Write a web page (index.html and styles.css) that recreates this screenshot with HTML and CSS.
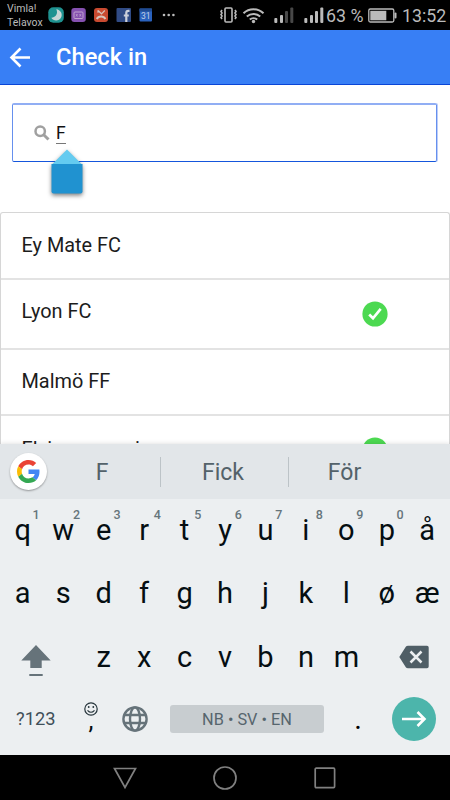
FILE: index.html
```html
<!DOCTYPE html>
<html lang="en">
<head>
<meta charset="utf-8">
<title>Check in</title>
<link rel="stylesheet" href="styles.css">
</head>
<body>
<div class="status">
  <div class="carrier"><span>Vimla!</span><span>Telavox</span></div>
  <svg class="notif" width="130" height="30" viewBox="0 0 130 30">
    <rect x="0.300" y="7.300" width="15.500" height="15.500" rx="5" fill="#1f9290"/>
    <path d="M8.300 9.300c2 3.800 -.2 8.300 -5 8.500a5.600 5.600 0 1 0 5-8.500z" fill="#c9d6d6"/>
    <rect x="23.300" y="8" width="14.500" height="14" rx="3" fill="#8551b0"/>
    <rect x="26" y="12" width="9" height="6.500" rx="1" fill="none" stroke="#c0a4cf"/>
    <path d="M28 14l1.500 2.500m0-2.500L28 16.500M31.500 14l1.500 2.500m0-2.500l-1.500 2.500" stroke="#c0a4cf" stroke-width=".7"/>
    <rect x="46" y="8" width="14" height="14" rx="3" fill="#c94a30"/>
    <path d="M50 10.500l3.500 3.300 3.300-3.300M50 10.300v2.500" fill="none" stroke="#d8c4bb" stroke-width="1.200"/>
    <path d="M48.800 19c1.500-3.300 7-3.300 8.600 0" fill="none" stroke="#d8c4bb" stroke-width="2"/>
    <rect x="68.500" y="8" width="14.500" height="14" rx="1" fill="#304b85"/>
    <path d="M81.500 10.800h-1.200q-2 0-2 2.200v9M75.800 15.500h5" fill="none" stroke="#ccd0da" stroke-width="2.200"/>
    <rect x="91.500" y="8.500" width="12.500" height="13" rx="1" fill="#2a62bd"/>
    <path d="M91.500 8.500h12.500v3h-12.500z" fill="#204b91"/>
    <text x="97.700" y="18.800" text-anchor="middle" class="cal">31</text>
    <g fill="#bbb"><circle cx="116" cy="15" r="1.300"/><circle cx="120.700" cy="15" r="1.300"/><circle cx="125.400" cy="15" r="1.300"/></g>
  </svg>
  <svg class="signals" width="106" height="30" viewBox="218 0 106 30">
    <g fill="none" stroke="#bbb">
      <rect x="225" y="8" width="7" height="14" rx="1" stroke-width="1.600"/>
      <path d="M222 10l-1 1.500 1 1.500-1 1.500 1 1.500-1 1.500 1 1.500M235 10l1 1.500-1 1.500 1 1.500-1 1.500 1 1.500-1 1.500" stroke-width="1.600"/>
      <path d="M243.500 13.300a14.500 14.500 0 0 1 20 0M246.800 16.600a10 10 0 0 1 13.400 0M249.800 19.600a5.500 5.500 0 0 1 7.400 0" stroke-width="2"/>
    </g>
    <circle cx="253.500" cy="21.500" r="1.700" fill="#bbb"/>
    <g fill="#bbb"><rect x="274.300" y="18" width="3" height="5" rx="1"/><rect x="280" y="15" width="3" height="8" rx="1"/>
    <rect x="304.300" y="18" width="3" height="5" rx="1"/><rect x="310" y="15" width="3" height="8" rx="1"/><rect x="315" y="11" width="3" height="12" rx="1"/><rect x="320.300" y="7.500" width="3" height="15.500" rx="1"/></g>
    <g fill="#484848"><rect x="285" y="11" width="3" height="12" rx="1"/><rect x="290.300" y="7.500" width="3" height="15.500" rx="1"/></g>
  </svg>
  <span class="percent">63 %</span>
  <svg class="battery" width="30" height="30" viewBox="367 0 30 30">
    <rect x="368.800" y="9" width="25" height="13" rx="1.500" fill="none" stroke="#bbb" stroke-width="1.300"/>
    <rect x="370.300" y="10.800" width="16" height="9.500" fill="#bbb"/>
    <rect x="394.500" y="12.500" width="2" height="6" rx="1" fill="#bbb"/>
  </svg>
  <span class="clock">13:52</span>
</div>
<div class="header">
  <svg width="22" height="22" viewBox="0 0 22 22"><path d="M21 11.500H2.500M11.500 2.500L2.500 11.500l9 9" fill="none" stroke="#fff" stroke-width="2.600"/></svg>
  <h1>Check in</h1>
</div>
<div class="content">
  <div class="search">
    <svg width="16" height="16" viewBox="0 0 16 16"><circle cx="6.200" cy="6.200" r="4.700" fill="none" stroke="#a0a0a0" stroke-width="2.500"/><path d="M9.700 9.700l4.800 4.800" stroke="#a0a0a0" stroke-width="3"/></svg>
    <span class="query">F</span>
    <svg class="handle" width="48" height="60" viewBox="0 0 48 60"><path d="M24 8.500L39.500 24H8.500z" fill="#64cbf0"/><path d="M8.500 23h31v27.500q0 2-2 2h-27q-2 0-2-2z" fill="#2092d0"/></svg>
  </div>
  <div class="list">
    <div class="row">Ey Mate FC</div>
    <div class="row tall">Lyon FC
      <svg class="check" width="26" height="26" viewBox="0 0 26 26"><circle cx="13" cy="13" r="12.600" fill="#4cd951"/><path d="M7.200 13.500l3.800 3.800L18.700 7.800" fill="none" stroke="#fff" stroke-width="2.700"/></svg>
    </div>
    <div class="row short">Malmö FF</div>
    <div class="row tall last">Elvira me sarin
      <svg class="check" width="26" height="26" viewBox="0 0 26 26"><circle cx="13" cy="13" r="12.600" fill="#4cd951"/><path d="M7.200 13.500l3.800 3.800L18.700 7.800" fill="none" stroke="#fff" stroke-width="2.700"/></svg>
    </div>
  </div>
</div>
<div class="keyboard">
  <div class="suggest">
    <div class="google"><svg width="23" height="23" viewBox="0 0 48 48">
      <path fill="#EA4335" d="M24 9.500c3.540 0 6.710 1.220 9.210 3.600l6.850-6.850C35.900 2.380 30.470 0 24 0 14.620 0 6.510 5.380 2.560 13.220l7.980 6.190C12.430 13.720 17.740 9.500 24 9.500z"/>
      <path fill="#4285F4" d="M46.980 24.550c0-1.570-.15-3.090-.38-4.550H24v9.020h12.940c-.58 2.960-2.260 5.480-4.780 7.180l7.730 6c4.510-4.180 7.090-10.360 7.090-17.650z"/>
      <path fill="#FBBC05" d="M10.530 28.590A14.500 14.500 0 0 1 9.770 24c0-1.600.27-3.140.76-4.590l-7.980-6.190A23.900 23.900 0 0 0 0 24c0 3.880.92 7.540 2.560 10.780z"/>
      <path fill="#34A853" d="M24 48c6.480 0 11.930-2.130 15.890-5.810l-7.730-6c-2.150 1.450-4.920 2.300-8.160 2.300-6.260 0-11.570-4.220-13.470-9.910l-7.980 6.190C6.510 42.620 14.620 48 24 48z"/></svg></div>
    <span class="word first">F</span><i></i><span class="word mid">Fick</span><i></i><span class="word end">För</span>
  </div>
  <div class="keys">
    <span>q<sup>1</sup></span><span>w<sup>2</sup></span><span>e<sup>3</sup></span><span>r<sup>4</sup></span><span>t<sup>5</sup></span><span>y<sup>6</sup></span><span>u<sup>7</sup></span><span>i<sup>8</sup></span><span>o<sup>9</sup></span><span>p<sup>0</sup></span><span>å</span>
    <span>a</span><span>s</span><span>d</span><span>f</span><span>g</span><span>h</span><span>j</span><span>k</span><span>l</span><span>ø</span><span>æ</span>
    <span class="shift"><svg width="30" height="32" viewBox="0 0 30 32"><path d="M15 1l14.700 15.500h-9V24H9.300v-7.500h-9z" fill="#66737a"/><path d="M8.300 31h13.400" stroke="#66737a" stroke-width="2"/></svg></span><span class="low">z</span><span class="low">x</span><span class="low">c</span><span class="low">v</span><span class="low">b</span><span class="low">n</span><span class="low">m</span><span class="del"><svg width="30" height="24" viewBox="0 0 30 24"><path d="M.3 12L6.800 1.800Q7.500.7 9 .7h19q1.700 0 1.700 1.700v19.200q0 1.700-1.700 1.700H9q-1.500 0-2.200-1.100z" fill="#4f5e66"/><path d="M11.500 6.500l11 11M22.500 6.500l-11 11" stroke="#eceff1" stroke-width="2.500"/></svg></span>
  </div>
  <div class="bottom">
    <span class="sym">?123</span>
    <span class="comma"><svg width="14" height="14" viewBox="0 0 14 14"><g fill="none" stroke="#25343b"><circle cx="7" cy="7" r="6.200" stroke-width="1.200"/><path d="M3.500 8.300q3.500 4 7 0" stroke-width="1.100"/></g><circle cx="4.700" cy="5" r=".9" fill="#25343b"/><circle cx="9.300" cy="5" r=".9" fill="#25343b"/></svg><b>,</b></span>
    <svg class="globe" width="26" height="26" viewBox="0 0 26 26"><g fill="none" stroke="#66737a" stroke-width="2.400"><circle cx="13" cy="13" r="11.600"/><ellipse cx="13" cy="13" rx="5" ry="11.600"/><path d="M2.500 9h21M2.500 17h21"/></g></svg>
    <span class="space">NB • SV • EN</span>
    <span class="dot">.</span>
    <span class="go"><svg width="26" height="18" viewBox="0 0 26 18"><path d="M1 9h22.500M16.500 2l7 7-7 7" fill="none" stroke="#fff" stroke-width="2.600"/></svg></span>
  </div>
</div>
<div class="nav">
  <svg width="24" height="24" viewBox="0 0 24 24"><path d="M1.500 2.500h21L12 21.500z"/></svg>
  <svg width="24" height="24" viewBox="0 0 24 24"><circle cx="12" cy="12" r="11"/></svg>
  <svg width="24" height="24" viewBox="0 0 24 24"><rect x="2.200" y="2.200" width="19.400" height="19.400" rx="1"/></svg>
</div>
</body>
</html>
```
FILE: styles.css
```css
* { box-sizing: border-box; }
body { margin: 0; width: 450px; height: 800px; overflow: hidden; display: flex; flex-direction: column; background: #fff; font-family: Roboto, "Liberation Sans", sans-serif; }
svg { display: block; flex: none; }
.status { height: 30px; flex: none; background: #000; color: #bbb; display: flex; align-items: center; }
.carrier { width: 48px; padding: 2px 0 0 7px; font-size: 10.500px; line-height: 14px; display: flex; flex-direction: column; }
.cal { font-size: 8.500px; fill: #c3cfe2; }
.signals { margin-left: 40px; }
.percent { width: 43px; padding-left: 2px; font-size: 17.800px; white-space: nowrap; }
.clock { margin-left: 5px; font-size: 17.800px; }
.header { height: 55px; flex: none; background: #387ff5; border-bottom: 1px solid #0a45d6; display: flex; align-items: center; padding-left: 9px; }
.header h1 { margin: 0 0 0 25px; font-size: 23.700px; font-weight: 500; line-height: 30px; color: #fff; }
.content { height: 359px; flex: none; overflow: hidden; }
.search { position: relative; height: 59px; margin: 18px 13px 50px 12px; border: 1px solid #6690ee; border-top: 2px solid #91aef4; border-bottom-color: #1556dc; border-radius: 2px; box-shadow: 1px 0 0 #bccdf8; display: flex; align-items: center; padding-left: 21px; }
.query { margin-left: 6px; font-size: 17.500px; line-height: 20px; color: #111; border-bottom: 1px solid #777; }
.handle { position: absolute; left: 30px; top: 36px; filter: drop-shadow(0 2px 2px rgba(0,0,0,.5)); }
.list { border: 1px solid #d6d6d6; border-bottom: 0; border-radius: 3px 3px 0 0; height: 240px; }
.row { height: 67px; border-bottom: 2px solid #e3e3e3; padding: 0 61px 0 20.500px; display: flex; align-items: center; justify-content: space-between; font-size: 19.900px; color: #1c1c1c; }
.row.tall { height: 70px; padding-bottom: 5px; }
.row.tall .check { position: relative; top: 2px; }
.row.short { height: 66px; padding-bottom: 2px; }
.row.last { padding-bottom: 1px; }
.row.last .check { top: 0; }
.keyboard { height: 311px; flex: none; background: #eceff1; display: flex; flex-direction: column; position: relative; box-shadow: 0 0 5px rgba(0,0,0,.15); }
.suggest { height: 55px; background: #e2e6e9; display: flex; align-items: center; color: #53626a; font-size: 23px; }
.google { width: 37px; height: 37px; margin: 0 1px 1px 10px; border-radius: 50%; background: #fff; display: flex; align-items: center; justify-content: center; box-shadow: 0 1px 2px rgba(0,0,0,.35); }
.suggest i { width: 1px; height: 30px; background: #bcc3c7; }
.word { text-align: center; padding-top: 2px; }
.word.first { width: 112px; padding-right: 4px; }
.word.mid { width: 127px; padding-right: 3px; }
.word.end { width: 111px; }
.keys { display: grid; grid-template-columns: repeat(11, 1fr); grid-auto-rows: 63px; padding: 0 2.500px; font-size: 29px; color: #050e12; }
.keys span { position: relative; display: flex; align-items: center; justify-content: center; padding-bottom: 2px; }
.keys .low { padding-bottom: 0; }
.keys sup { position: absolute; left: 30px; top: 8px; font-size: 12.500px; line-height: 16px; font-weight: 500; color: #66757c; }
.keys .shift, .keys .del { grid-column: span 2; }
.keys .shift { padding: 6px 14px 0 0; }
.keys .del { padding: 1px 0 0 14px; }
.bottom { height: 61px; display: flex; align-items: center; }
.sym { width: 84px; padding-left: 16px; font-size: 18.300px; color: #3f5059; }
.comma { width: 14px; height: 34px; display: flex; flex-direction: column; align-items: center; }
.comma b { font-weight: 400; font-size: 25px; line-height: 24px; margin-top: -7px; color: #050e12; }
.globe { margin-left: 24px; }
.space { width: 154px; height: 28px; margin-left: 22px; border-radius: 3px; background: #c8cdd0; color: #56656d; font-size: 16.300px; line-height: 29px; text-align: center; }
.dot { width: 68px; text-align: center; font-size: 29px; }
.go { width: 44px; height: 44px; border-radius: 50%; background: #4cb5ab; display: flex; align-items: center; justify-content: center; }
.nav { height: 45px; flex: none; background: #000; display: flex; align-items: center; gap: 76px; padding-left: 113px; }
.nav svg { fill: none; stroke: #808080; stroke-width: 1.700; }
```
